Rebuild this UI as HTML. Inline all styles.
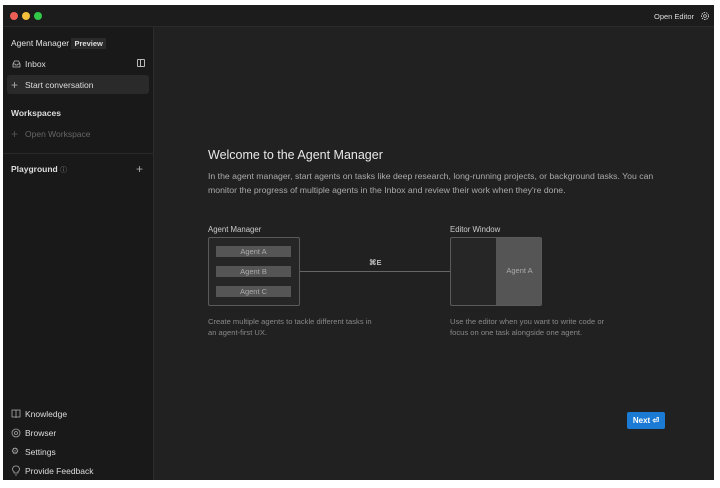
<!DOCTYPE html>
<html><head><style>
*{margin:0;padding:0;box-sizing:border-box}
body{width:720px;height:488px;background:#fff;position:relative;overflow:hidden;font-family:"Liberation Sans",sans-serif;}
.win{position:absolute;left:3px;top:5px;width:711px;height:475px;background:#212121;overflow:hidden}
.title{position:absolute;left:0;top:0;width:711px;height:22px;background:#1c1c1c;border-bottom:1px solid #2a2a2a}
.dot{position:absolute;top:7px;width:8px;height:8px;border-radius:50%}
.side{position:absolute;left:0;top:22px;width:151px;height:453px;background:#191919;border-right:1px solid #2c2c2c}
.t{position:absolute;white-space:nowrap;color:#ddd;font-size:8.5px}
.abox{position:absolute;background:#555;color:#aaa;font-size:7.5px;text-align:center;line-height:11px;width:75px;height:11px}
</style></head><body>
<div class="win">
<div class="title">
<div class="dot" style="left:7px;background:#ec5f57"></div>
<div class="dot" style="left:19px;background:#f4bf3b"></div>
<div class="dot" style="left:31px;background:#33c748"></div>
<div class="t" style="left:651px;top:7px;font-size:7.5px;color:#ddd">Open Editor</div>
<svg style="position:absolute;left:697px;top:6px" width="10" height="10" viewBox="0 0 10 10"><circle cx="5" cy="5" r="3.5" fill="none" stroke="#ccc" stroke-width="1" stroke-dasharray="1.5 1"/><circle cx="5" cy="5" r="1.4" fill="none" stroke="#ccc" stroke-width="0.8"/></svg>
</div>
<div class="side">
<div class="t" style="left:8px;top:11px;font-size:8.5px;color:#e4e4e4">Agent Manager <span style="background:#2a2a2a;padding:1px 3px;font-size:7.5px;font-weight:bold;color:#ddd">Preview</span></div>
<svg style="position:absolute;left:9px;top:33px" width="9" height="8"><path d="M1 4L2.5 1H6.5L8 4V7H1Z M1 4H3L3.5 5H5.5L6 4H8" fill="none" stroke="#bbb" stroke-width=".8"/></svg>
<div class="t" style="left:22px;top:32px">Inbox</div>
<div style="position:absolute;left:134px;top:32px;width:8px;height:8px;border:1px solid #bbb;border-radius:1px"><div style="position:absolute;left:2px;top:0;width:1px;height:6px;background:#bbb"></div></div>
<div style="position:absolute;left:4px;top:48px;width:142px;height:19px;background:#2a2a2a;border-radius:3px"></div>
<div class="t" style="left:8px;top:51px;color:#aaa;font-size:12px">+</div>
<div class="t" style="left:22px;top:53px">Start conversation</div>
<div class="t" style="left:8px;top:81px;font-weight:bold;color:#ddd">Workspaces</div>
<div class="t" style="left:8px;top:100px;color:#555;font-size:12px">+</div>
<div class="t" style="left:22px;top:102px;color:#666">Open Workspace</div>
<div style="position:absolute;left:0;top:126px;width:151px;height:1px;background:#2a2a2a"></div>
<div class="t" style="left:8px;top:137px;font-weight:bold;color:#ddd">Playground <span style="font-weight:normal;color:#888;font-size:7px">ⓘ</span></div>
<div class="t" style="left:133px;top:135px;color:#aaa;font-size:12px">+</div>
<svg style="position:absolute;left:8px;top:382px" width="10" height="9"><path d="M1 1H4.5L5 2L5.5 1H9V8H5.5L5 8.5L4.5 8H1Z M5 2V8" fill="none" stroke="#aaa" stroke-width=".8"/></svg><div class="t" style="left:22px;top:382px">Knowledge</div>
<svg style="position:absolute;left:8px;top:401px" width="10" height="10"><circle cx="5" cy="5" r="4" fill="none" stroke="#aaa" stroke-width=".8"/><circle cx="5" cy="5" r="1.5" fill="none" stroke="#aaa" stroke-width=".8"/></svg><div class="t" style="left:22px;top:401px">Browser</div>
<div class="t" style="left:8px;top:419px;color:#aaa;font-size:9px">⚙</div><div class="t" style="left:22px;top:420px">Settings</div>
<svg style="position:absolute;left:8px;top:438px" width="10" height="11"><path d="M5 1A3 3 0 0 0 3 6.5V8H7V6.5A3 3 0 0 0 5 1Z M4 10H6" fill="none" stroke="#aaa" stroke-width=".8"/></svg><div class="t" style="left:22px;top:439px">Provide Feedback</div>
</div>
<div class="t" style="left:205px;top:143px;font-size:12.5px;color:#e8e8e8">Welcome to the Agent Manager</div>
<div class="t" style="left:205px;top:165px;font-size:8.7px;color:#aaa;line-height:13.5px">In the agent manager, start agents on tasks like deep research, long-running projects, or background tasks. You can<br>monitor the progress of multiple agents in the Inbox and review their work when they're done.</div>
<div class="t" style="left:205px;top:220px;font-size:7.8px;color:#ccc">Agent Manager</div>
<div style="position:absolute;left:205px;top:232px;width:92px;height:69px;border:1px solid #5a5a5a;border-radius:2px;background:#262626"></div>
<div class="abox" style="left:213px;top:241px">Agent A</div>
<div class="abox" style="left:213px;top:261px">Agent B</div>
<div class="abox" style="left:213px;top:281px">Agent C</div>
<div style="position:absolute;left:297px;top:266px;width:150px;height:1px;background:#666"></div>
<div class="t" style="left:366px;top:253px;font-size:7.5px;color:#bbb;font-weight:bold">⌘E</div>
<div class="t" style="left:447px;top:220px;font-size:7.8px;color:#ccc">Editor Window</div>
<div style="position:absolute;left:447px;top:232px;width:92px;height:69px;border:1px solid #5a5a5a;border-radius:2px;background:#262626;overflow:hidden"><div style="position:absolute;left:45px;top:0;width:47px;height:69px;background:#555;color:#aaa;font-size:7.5px;line-height:66px;text-align:center">Agent A</div></div>
<div class="t" style="left:205px;top:311px;font-size:7.6px;color:#888;line-height:11px">Create multiple agents to tackle different tasks in<br>an agent-first UX.</div>
<div class="t" style="left:447px;top:311px;font-size:7.6px;color:#888;line-height:11px">Use the editor when you want to write code or<br>focus on one task alongside one agent.</div>
<div style="position:absolute;left:624px;top:407px;width:38px;height:17px;background:#1a7ad4;border-radius:2px;color:#fff;font-size:8px;font-weight:bold;line-height:17px;text-align:center">Next ⏎</div>
</div>
</body></html>
